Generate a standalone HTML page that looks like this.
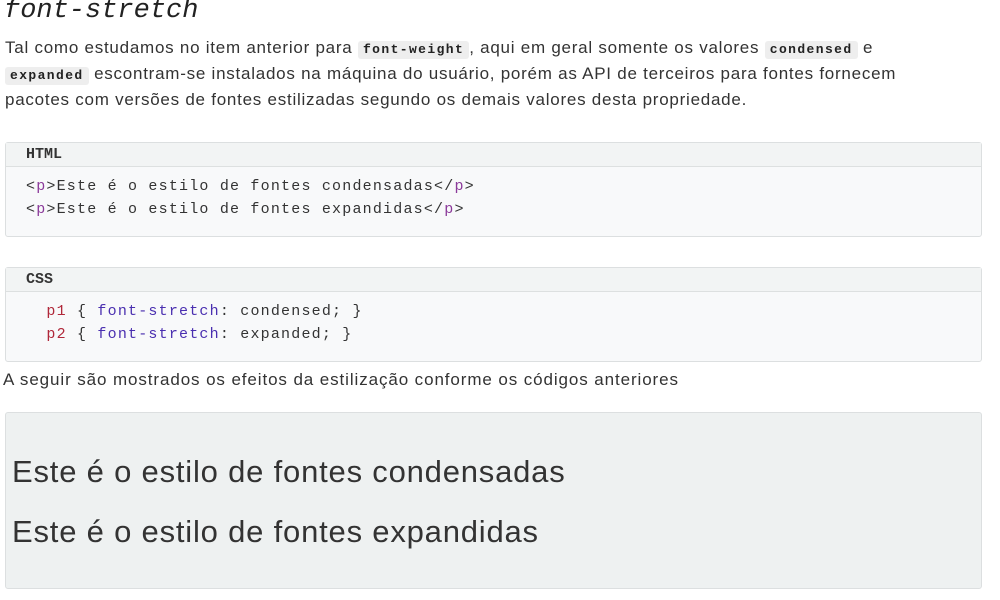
<!DOCTYPE html>
<html><head><meta charset="utf-8"><style>
body{margin:0;width:1000px;height:600px;background:#fff;font-family:"Liberation Sans",sans-serif;color:#333;overflow:hidden;position:relative}
.t{position:absolute;left:4px;top:-4px;font:italic 27px "Liberation Mono",monospace;color:#222}
.p{position:absolute;left:5px;top:35px;width:995px;font-size:17px;line-height:26px;letter-spacing:0.75px;color:#333;white-space:nowrap}
code{font-family:"Liberation Mono",monospace;font-size:13px;font-weight:bold;background:#eee;padding:1px 5px;border-radius:3px;letter-spacing:1.4px;color:#222;line-height:16px;display:inline-block}
.box{position:absolute;left:5px;width:975px;border:1px solid #dcdfe0;border-radius:3px;background:#f8f9fa}
.hd{height:23px;border-bottom:1px solid #dde0e0;background:#f2f4f4;font:bold 15px "Liberation Mono",monospace;padding-left:20px;line-height:24px;color:#333}
.cd{font:15px "Liberation Mono",monospace;letter-spacing:1.2px;line-height:23px;padding:8px 0 0 20px;white-space:pre;color:#333}
.k{color:#8b3a9a}.r{color:#b0283a}.b{color:#4a2fb0}
.s{position:absolute;left:3px;top:370px;font-size:17px;letter-spacing:0.9px;color:#333}
.res{position:absolute;left:5px;top:412px;width:975px;height:175px;background:#eef1f1;border:1px solid #dcdfe0;border-radius:3px}
.res div{position:absolute;left:6px;font-size:31px;color:#333;letter-spacing:0.8px}
</style></head><body>
<div class="t">font-stretch</div>
<div class="p">Tal como estudamos no item anterior para <code>font-weight</code>, aqui em geral somente os valores <code>condensed</code> e<br><code>expanded</code> escontram-se instalados na máquina do usuário, porém as API de terceiros para fontes fornecem<br>pacotes com versões de fontes estilizadas segundo os demais valores desta propriedade.</div>
<div class="box" style="top:142px;height:93px"><div class="hd">HTML</div><div class="cd">&lt;<span class="k">p</span>&gt;Este é o estilo de fontes condensadas&lt;/<span class="k">p</span>&gt;
&lt;<span class="k">p</span>&gt;Este é o estilo de fontes expandidas&lt;/<span class="k">p</span>&gt;</div></div>
<div class="box" style="top:267px;height:93px"><div class="hd">CSS</div><div class="cd">  <span class="r">p1</span> { <span class="b">font-stretch</span>: condensed; }
  <span class="r">p2</span> { <span class="b">font-stretch</span>: expanded; }</div></div>
<div class="s">A seguir são mostrados os efeitos da estilização conforme os códigos anteriores</div>
<div class="res"><div style="top:41px">Este é o estilo de fontes condensadas</div><div style="top:101px">Este é o estilo de fontes expandidas</div></div>
</body></html>
